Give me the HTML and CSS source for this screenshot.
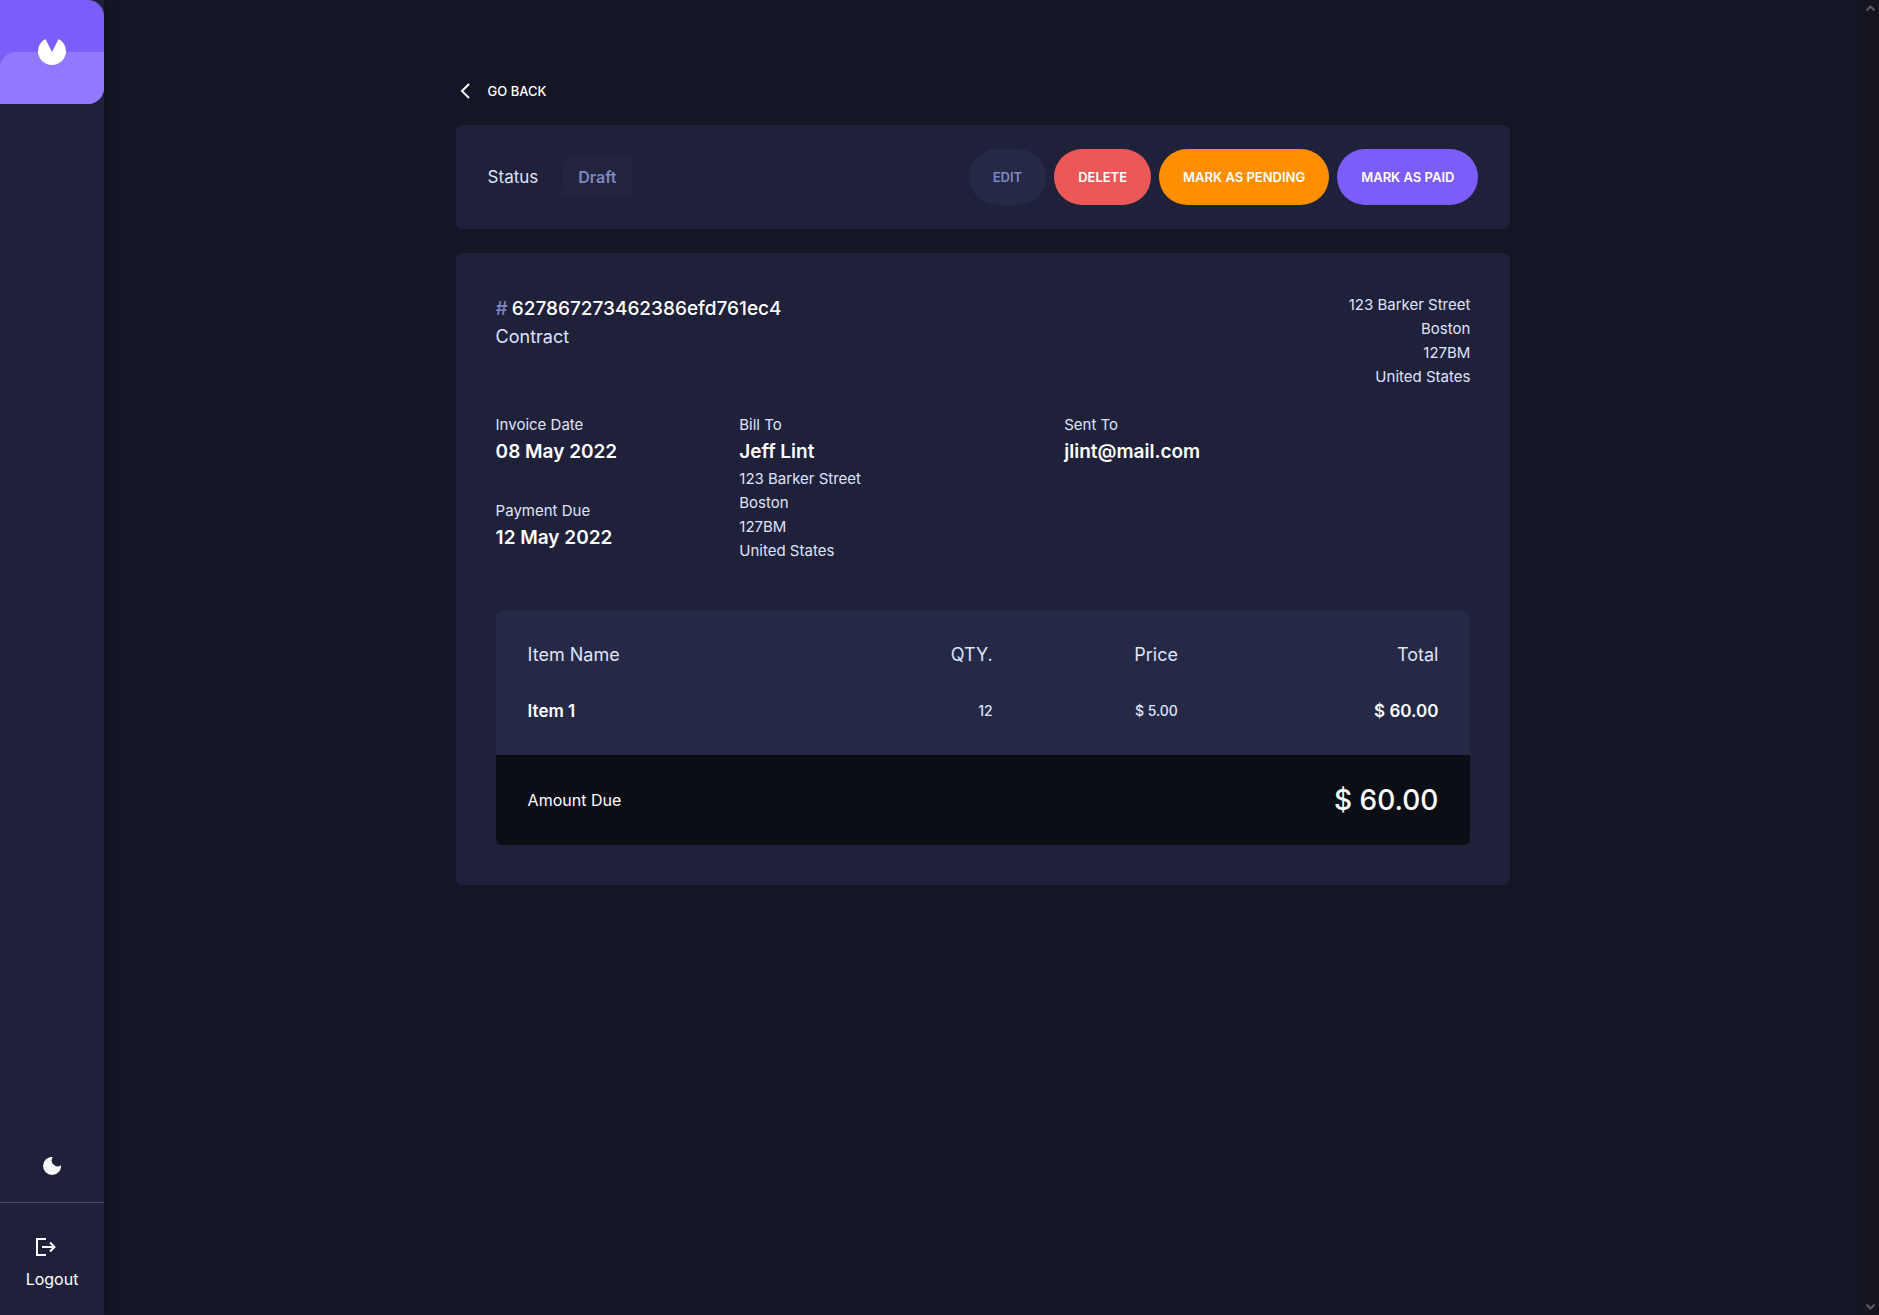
FILE: index.html
```html
<!DOCTYPE html>
<html lang="en">
<head>
<meta charset="utf-8">
<meta name="viewport" content="width=device-width, initial-scale=1">
<title>Invoice</title>
<link rel="stylesheet" href="styles.css">
</head>
<body>
<div class="app">
  <aside class="sidebar">
    <a class="logo" href="#" aria-label="Home">
      <svg width="28" height="26" viewBox="0 0 28 26" aria-hidden="true"><path fill="#fff" d="M20.5 0A14 14 0 0 1 28 12.3C28 19.9 21.700 26 14 26S0 19.900 0 12.300A14 14 0 0 1 7.500 0L14 12.900Z"/></svg>
    </a>
    <div class="sidebar-bottom">
      <button class="theme" type="button" aria-label="Toggle theme">
        <svg width="18" height="18" viewBox="0 0 18 18" aria-hidden="true"><path fill="#f8f8fb" d="M9.800 0A5.900 5.900 0 0 0 18 8.200A9 9 0 1 1 9.800 0Z"/></svg>
      </button>
      <button class="logout" type="button">
        <svg width="20" height="18" viewBox="0 0 20 18" fill="none" stroke="#fff" stroke-width="2" aria-hidden="true"><path d="M10 1H1V17H10M6 9H18.500M14 4.500L18.500 9L14 13.500"/></svg>
        <span>Logout</span>
      </button>
    </div>
  </aside>
  <main class="main">
    <a class="back" href="#">
      <svg width="10" height="16" viewBox="0 0 10 16" fill="none" stroke="#fff" stroke-width="2" aria-hidden="true"><path d="M9 1L2 8L9 15"/></svg>
      GO BACK
    </a>
    <section class="card status-bar">
      <div class="status">Status <span class="badge">Draft</span></div>
      <div class="actions">
        <button class="btn edit" type="button">EDIT</button>
        <button class="btn delete" type="button">DELETE</button>
        <button class="btn pending" type="button">MARK AS PENDING</button>
        <button class="btn paid" type="button">MARK AS PAID</button>
      </div>
    </section>
    <section class="card invoice">
      <header class="invoice-head">
        <div>
          <h1 class="invoice-id"><span class="hash">#</span>627867273462386efd761ec4</h1>
          <p class="description">Contract</p>
        </div>
        <address class="address from">123 Barker Street<br>Boston<br>127BM<br>United States</address>
      </header>
      <div class="details">
        <div class="dates">
          <div><p class="label">Invoice Date</p><p class="value">08 May 2022</p></div>
          <div><p class="label">Payment Due</p><p class="value">12 May 2022</p></div>
        </div>
        <div>
          <p class="label">Bill To</p>
          <p class="value">Jeff Lint</p>
          <address class="address">123 Barker Street<br>Boston<br>127BM<br>United States</address>
        </div>
        <div>
          <p class="label">Sent To</p>
          <p class="value">jlint@mail.com</p>
        </div>
      </div>
      <table class="items">
        <colgroup><col class="col-name"><col class="col-qty"><col class="col-price"><col class="col-total"></colgroup>
        <thead><tr><th scope="col">Item Name</th><th scope="col">QTY.</th><th scope="col">Price</th><th scope="col">Total</th></tr></thead>
        <tbody><tr><td class="strong">Item 1</td><td class="small">12</td><td class="small">$ 5.00</td><td class="strong">$ 60.00</td></tr></tbody>
        <tfoot><tr><th scope="row" colspan="2">Amount Due</th><td class="grand" colspan="2">$ 60.00</td></tr></tfoot>
      </table>
    </section>
  </main>
  <div class="scroll-track" aria-hidden="true">
    <svg width="9" height="7" viewBox="0 0 9 7" fill="none" stroke="#5b5c66" stroke-width="2"><path d="M.500 5.500L4.500 1.500L8.500 5.500"/></svg>
    <svg width="9" height="7" viewBox="0 0 9 7" fill="none" stroke="#5b5c66" stroke-width="2"><path d="M.500 1.500L4.500 5.500L8.500 1.500"/></svg>
  </div>
</div>
</body>
</html>
```
FILE: styles.css
```css
* { box-sizing: border-box; margin: 0; }

body {
  background: #141625;
  color: #fff;
  font-family: Inter, "Open Sans", sans-serif;
  font-size: 15px;
  line-height: 24px;
}

button { border: 0; background: none; color: inherit; font: inherit; cursor: pointer; }
a { color: inherit; text-decoration: none; }
svg { display: block; flex: none; }

.app { display: grid; grid-template-columns: 104px 1fr 17px; min-height: 100vh; }

.sidebar {
  display: flex;
  flex-direction: column;
  justify-content: space-between;
  background: #1f213a;
  box-shadow: 0 0 12px rgba(0, 0, 0, .4);
}
.logo {
  display: grid;
  place-items: center;
  position: relative;
  height: 104px;
  overflow: hidden;
  border-radius: 0 16px 16px 0;
  background: #7c5dfa;
}
.logo::before {
  content: "";
  position: absolute;
  inset: 50% 0 0;
  border-radius: 16px 0 0;
  background: #9277ff;
}
.logo svg { position: relative; }
.sidebar-bottom { display: flex; flex-direction: column; }
.theme { display: grid; place-items: center; height: 72px; padding: 0; }
.logout {
  display: flex;
  flex-direction: column;
  gap: 11px;
  align-items: center;
  padding: 35px 0 24px;
  border-top: 1px solid #494e6e;
  font-size: 16px;
}
.logout svg { margin-right: 12px; }

.main { width: 60%; margin: 0 auto; padding: 79px 0 40px; }
.back {
  display: inline-flex;
  align-items: center;
  gap: 18px;
  padding-left: 4px;
  margin-bottom: 22px;
  font-size: 13px;
  font-weight: 500;
}

.card { border-radius: 6px; background: #1f213a; }
.status-bar { display: flex; justify-content: space-between; align-items: center; padding: 24px 32px; margin-bottom: 24px; }
.status { display: flex; align-items: center; gap: 24px; color: #dfe3fa; font-size: 17px; }
.badge { padding: 8px 16px; border-radius: 6px; background: #22243d; color: #7e88c3; font-size: 16px; font-weight: 600; }
.actions { display: flex; gap: 8px; }
.btn { height: 56px; padding: 0 24px; border-radius: 28px; font-size: 13px; font-weight: 600; white-space: nowrap; }
.edit { background: #252945; color: #7e88c3; }
.delete { background: #ec5757; }
.pending { background: #ff8f00; }
.paid { background: #7c5dfa; }

.invoice { padding: 40px; }
.invoice-head { display: flex; justify-content: space-between; margin-bottom: 24px; }
.invoice-id { font-size: 19px; line-height: 32px; font-weight: 500; }
.hash { margin-right: 4px; color: #7e88c3; }
.description { color: #dfe3fa; font-size: 18px; }
.address { color: #dfe3fa; font-style: normal; }
.from { text-align: right; }
.details { display: grid; grid-template-columns: 3fr 4fr 5fr; margin-bottom: 48px; }
.dates { display: flex; flex-direction: column; gap: 32px; }
.label { color: #dfe3fa; }
.value { font-size: 19px; line-height: 30px; font-weight: 600; }

.items { width: 100%; table-layout: fixed; border-collapse: collapse; border-radius: 6px; overflow: hidden; background: #252945; }
.col-name { width: 39%; }
.col-qty { width: 12%; }
.col-price { width: 19%; }
.col-total { width: 30%; }
.items th, .items td { padding: 0; text-align: right; vertical-align: middle; }
.items tr > :first-child { padding-left: 32px; text-align: left; }
.items tr > :last-child { padding-right: 32px; }
.items thead th { padding-top: 32px; color: #dfe3fa; font-size: 18px; font-weight: 400; }
.items tbody td { padding-top: 32px; padding-bottom: 32px; }
.strong { font-size: 17px; font-weight: 600; }
.small { color: #dfe3fa; font-size: 14px; font-weight: 500; }
.items tfoot { background: #0c0e16; }
.items tfoot th { font-size: 16px; font-weight: 400; }
.items .grand { padding-top: 24px; padding-bottom: 24px; font-size: 28px; line-height: 42px; font-weight: 500; }

.scroll-track { display: flex; flex-direction: column; align-items: center; justify-content: space-between; padding: 5px 0; background: #16151f; }
```
